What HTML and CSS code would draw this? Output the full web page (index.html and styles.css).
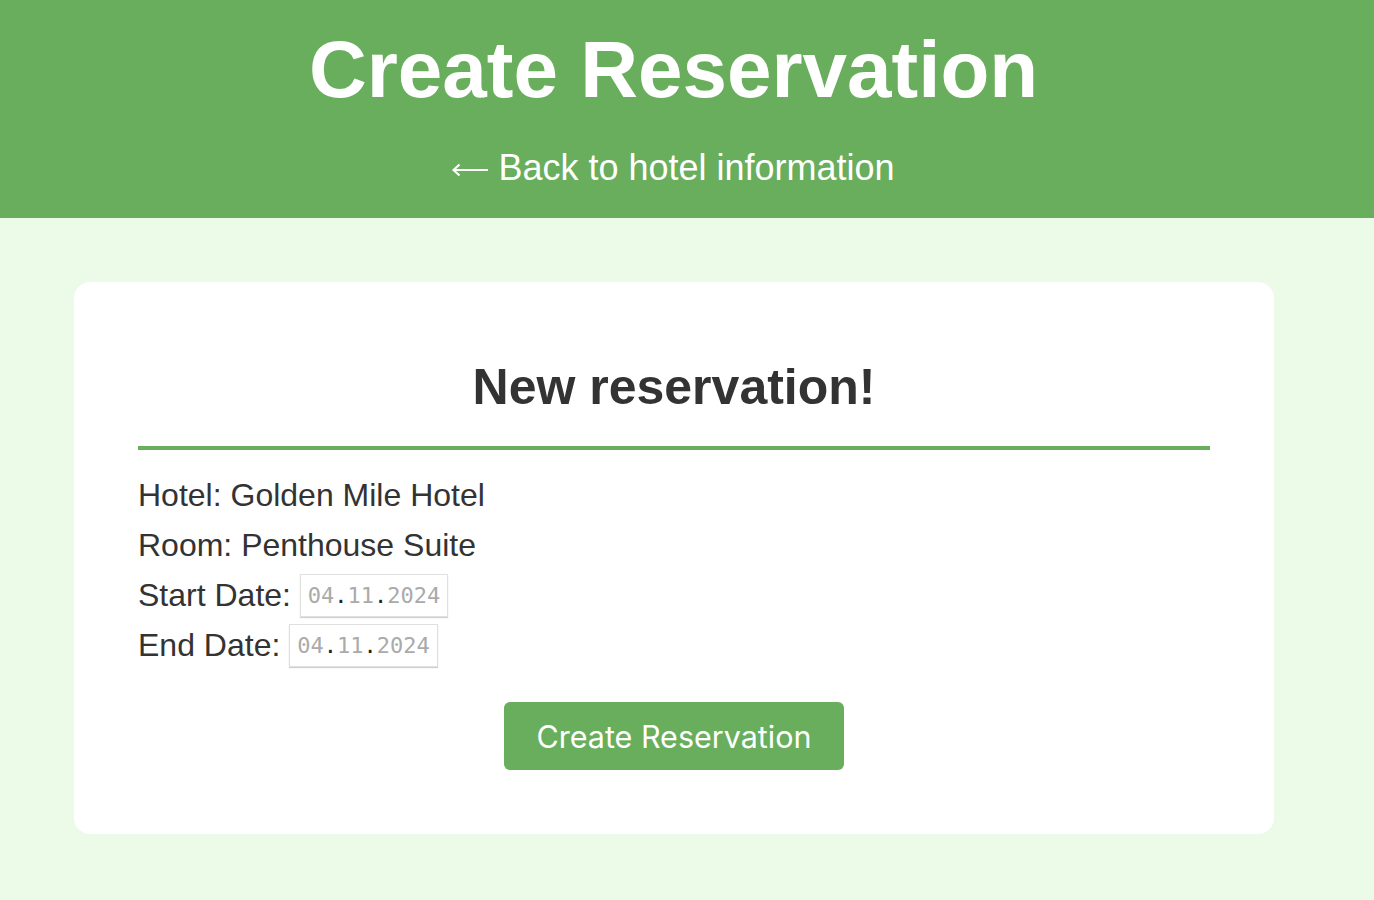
FILE: index.html
```html
<!DOCTYPE html>
<html>
<head>
<meta charset="utf-8">
<link rel="stylesheet" href="styles.css">
</head>
<body>
<header class="header">
  <h1 class="title">Create Reservation</h1>
  <a class="back" href="#"><svg class="arrow" width="36" height="14" viewBox="0 0 36 14" aria-hidden="true"><path d="M1.5 7H36M7.5 1.5L1.5 7L7.5 12.5" fill="none" stroke="#fff" stroke-width="2.2"/></svg> Back to hotel information</a>
</header>
<main class="main">
  <section class="card">
    <h2 class="card-title">New reservation!</h2>
    <div class="rule"></div>
    <p class="row">Hotel: Golden Mile Hotel</p>
    <p class="row">Room: Penthouse Suite</p>
    <p class="row">Start Date: <span class="date"><span class="d">04</span><span class="sep">.</span><span class="d">11</span><span class="sep">.</span><span class="d">2024</span></span></p>
    <p class="row">End Date: <span class="date"><span class="d">04</span><span class="sep">.</span><span class="d">11</span><span class="sep">.</span><span class="d">2024</span></span></p>
    <div class="actions">
      <button class="btn">Create Reservation</button>
    </div>
  </section>
</main>
</body>
</html>
```

FILE: styles.css
```css
* { box-sizing: border-box; }
html, body { margin: 0; padding: 0; }
body {
  background: #ebfbe8;
  font-family: "Liberation Sans", Arial, sans-serif;
  color: #333;
  height: 900px;
}
.header {
  background: #68ae5c;
  height: 218px;
  display: flex;
  flex-direction: column;
  align-items: center;
  padding-right: 27px;
  color: #fff;
}
.title {
  margin: 0;
  padding-top: 24px;
  font-size: 80px;
  line-height: 92px;
  font-weight: bold;
}
.back {
  margin-top: 31px;
  color: #fff;
  text-decoration: none;
  font-size: 36px;
  line-height: 42px;
  display: inline-flex;
  align-items: center;
}
.arrow {
  display: block;
  margin-top: 4px;
  margin-right: 10px;
}
.main {
  padding: 64px 100px 0 74px;
}
.card {
  width: 1200px;
  height: 552px;
  background: #fff;
  border-radius: 16px;
  padding: 75px 64px 0 64px;
}
.card-title {
  margin: 0;
  text-align: center;
  font-size: 50px;
  line-height: 60px;
  font-weight: bold;
  color: #333;
}
.rule {
  margin-top: 29px;
  height: 4px;
  background: #68ae5c;
}
.row {
  margin: 0;
  font-size: 32px;
  line-height: 50px;
  color: #333;
}
.row:first-of-type { margin-top: 20px; }
.date {
  display: inline-flex;
  align-items: center;
  height: 43px;
  padding: 0 7px;
  border: 1px solid #e0e0e0;
  box-shadow: 0 1px 1px rgba(0,0,0,0.18);
  font-family: "DejaVu Sans Mono", monospace;
  font-size: 22px;
  vertical-align: middle;
  position: relative;
  top: -2px;
  line-height: 1;
}
.d { color: #aaa; }
.sep { color: #222; }
.actions {
  display: flex;
  justify-content: center;
  margin-top: 32px;
}
.btn {
  width: 340px;
  height: 68px;
  border: none;
  border-radius: 6px;
  background: #68ae5c;
  color: #fff;
  font-family: Inter, "Noto Sans", sans-serif;
  font-size: 30.5px;
  padding: 0;
}
```
